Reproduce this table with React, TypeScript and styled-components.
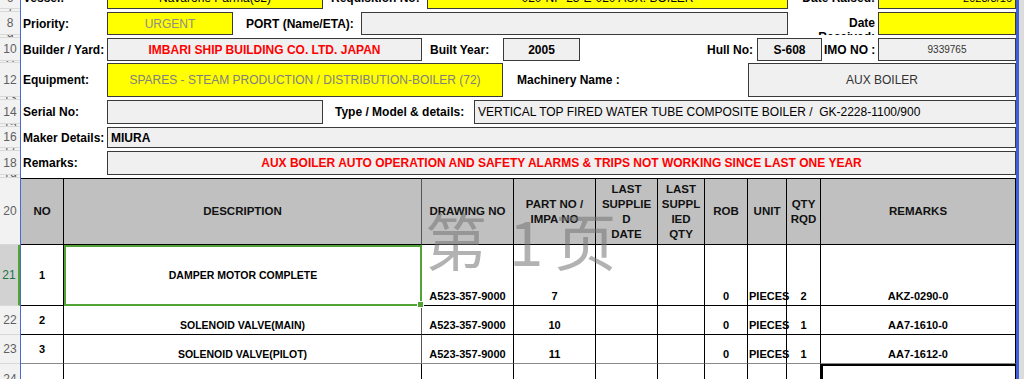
import React from 'react';
import styled, { createGlobalStyle } from 'styled-components';

const GlobalStyle = createGlobalStyle`
  html, body {
    margin: 0;
    padding: 0;
    background: #fff;
  }
  body {
    font-family: "Liberation Sans", Arial, sans-serif;
  }
`;

const Screen = styled.div`
  position: relative;
  width: 1024px;
  height: 379px;
  overflow: hidden;
  display: flex;
  background: #fff;
`;

const Sheet = styled.div`
  width: 1016px;
  flex-shrink: 0;
  display: flex;
  flex-direction: column;
  margin-top: -13px;
`;

const PageEdge = styled.div`
  width: 3px;
  flex-shrink: 0;
  background: #3f5fd6;
`;

const Outside = styled.div`
  flex: 1;
  background: #dcdcdc;
`;

const Row = styled.div<{ $h: number }>`
  display: flex;
  height: ${p => p.$h}px;
  flex-shrink: 0;
`;

const RowHead = styled.div<{ $active?: boolean }>`
  width: 20px;
  flex-shrink: 0;
  box-sizing: border-box;
  background: ${p => (p.$active ? '#d2d2d2' : '#f2f2f2')};
  border-bottom: 1px solid #d8d8d8;
  border-right: ${p => (p.$active ? '2px solid #4ea72e' : 'none')};
  color: ${p => (p.$active ? '#217346' : '#5f5f5f')};
  font-size: 12px;
  display: flex;
  align-items: center;
  justify-content: center;
  overflow: hidden;
`;

const Content = styled.div`
  flex: 1;
  display: flex;
  min-width: 0;
  border-left: 1px solid #4a66d9;
`;

const Label = styled.div<{ $w: number; $right?: boolean; $pad?: number }>`
  width: ${p => p.$w}px;
  flex-shrink: 0;
  box-sizing: border-box;
  display: flex;
  align-items: center;
  justify-content: ${p => (p.$right ? 'flex-end' : 'flex-start')};
  padding-left: ${p => (p.$right ? 0 : p.$pad ?? 2)}px;
  padding-right: ${p => (p.$right ? p.$pad ?? 3 : 0)}px;
  font-size: 12px;
  font-weight: bold;
  color: #000;
  white-space: nowrap;
  overflow: hidden;
`;

const StackLabel = styled.div<{ $w: number }>`
  width: ${p => p.$w}px;
  flex-shrink: 0;
  box-sizing: border-box;
  padding: 4px 3px 0 0;
  text-align: right;
  font-size: 12px;
  line-height: 14px;
  font-weight: bold;
  color: #000;
  overflow: hidden;
`;

const Field = styled.div<{
  $w?: number;
  $yellow?: boolean;
  $color?: string;
  $bold?: boolean;
  $align?: 'left' | 'center' | 'right';
  $size?: number;
}>`
  width: ${p => (p.$w ? `${p.$w}px` : 'auto')};
  flex: ${p => (p.$w ? 'none' : '1')};
  box-sizing: border-box;
  border: 1px solid #3a3a3a;
  background: ${p => (p.$yellow ? '#ffff00' : '#f0f0f0')};
  display: flex;
  align-items: center;
  justify-content: ${p =>
    p.$align === 'left' ? 'flex-start' : p.$align === 'right' ? 'flex-end' : 'center'};
  padding: 0 3px;
  font-size: ${p => p.$size ?? 12}px;
  font-weight: ${p => (p.$bold ? 'bold' : 'normal')};
  color: ${p => p.$color ?? '#000'};
  white-space: nowrap;
  overflow: hidden;
`;

const HeadCell = styled.div<{ $w: number; $dark?: boolean }>`
  width: ${p => p.$w}px;
  flex-shrink: 0;
  box-sizing: border-box;
  background: #c0c0c0;
  border-top: 1px solid #000;
  border-bottom: 1px solid #000;
  border-right: 1px solid ${p => (p.$dark ? '#555' : '#000')};
  display: flex;
  align-items: center;
  justify-content: center;
  text-align: center;
  font-size: 11.5px;
  line-height: 15px;
  font-weight: bold;
  color: #111;
`;

const DataCell = styled.div<{
  $w: number;
  $mid?: boolean;
  $left?: boolean;
  $size?: number;
  $lastRow?: boolean;
  $dark?: boolean;
}>`
  width: ${p => p.$w}px;
  flex-shrink: 0;
  box-sizing: border-box;
  border-right: 1px solid ${p => (p.$dark ? '#555' : '#000')};
  border-bottom: 1px solid ${p => (p.$lastRow ? '#8a8a8a' : '#000')};
  display: flex;
  align-items: ${p => (p.$mid ? 'center' : 'flex-end')};
  justify-content: ${p => (p.$left ? 'flex-start' : 'center')};
  padding: 0 0 ${p => (p.$mid ? 0 : 2)}px ${p => (p.$left ? 1 : 0)}px;
  font-size: ${p => p.$size ?? 11}px;
  line-height: 13px;
  font-weight: bold;
  color: #000;
  white-space: nowrap;
`;

const SelectedCell = styled(DataCell)`
  position: relative;
  border: 2px solid #52a336;

  &::after {
    content: '';
    position: absolute;
    right: -4px;
    bottom: -4px;
    width: 5px;
    height: 5px;
    background: #52a336;
    border: 1px solid #fff;
  }
`;

const EmptyCell = styled.div<{ $w: number; $boxed?: boolean }>`
  width: ${p => p.$w}px;
  flex-shrink: 0;
  box-sizing: border-box;
  border-right: 1px solid #000;
  border-top: ${p => (p.$boxed ? '2px solid #000' : 'none')};
  border-left: ${p => (p.$boxed ? '2px solid #000' : 'none')};
`;

// page-number watermark of the page break preview, lies over the table
const Watermark = styled.div`
  position: absolute;
  left: 425px;
  top: 208px;
  display: flex;
  align-items: center;
  font-family: "Noto Sans CJK SC", sans-serif;
  font-weight: 400;
  font-size: 62px;
  line-height: 1;
  color: rgba(115, 115, 115, 0.55);
  pointer-events: none;
`;

const Glyph = styled.span<{ $ml?: number }>`
  margin-left: ${p => p.$ml ?? 0}px;
`;

const cols = [43, 358, 92, 82, 62, 47, 43, 39, 34, 195];

const items = [
  { no: '1', desc: 'DAMPER MOTOR COMPLETE', dwg: 'A523-357-9000', part: '7', rem: 'AKZ-0290-0', qty: '2', h: 61 },
  { no: '2', desc: 'SOLENOID VALVE(MAIN)', dwg: 'A523-357-9000', part: '10', rem: 'AA7-1610-0', qty: '1', h: 29 },
  { no: '3', desc: 'SOLENOID VALVE(PILOT)', dwg: 'A523-357-9000', part: '11', rem: 'AA7-1612-0', qty: '1', h: 29 },
];

const Spacer: React.FC<{ n: string; h: number }> = ({ n, h }) => (
  <Row $h={h}>
    <RowHead>{n}</RowHead>
    <Content />
  </Row>
);

export default function App() {
  return (
    <Screen>
      <GlobalStyle />
      <Sheet>
        <Row $h={22}>
          <RowHead>6</RowHead>
          <Content>
            <Label $w={86}>Vessel:</Label>
            <Field $w={216} $yellow>Navarone Parma(32)</Field>
            <Label $w={104} $pad={8}>Requisition No:</Label>
            <Field $w={361} $yellow>020-NP-23-E-020 AUX. BOILER</Field>
            <Label $w={90} $right>Date Raised:</Label>
            <Field $yellow $align="right" $size={11}>2023/3/16</Field>
          </Content>
        </Row>
        <Spacer n="7" h={3} />
        <Row $h={23}>
          <RowHead>8</RowHead>
          <Content>
            <Label $w={86}>Priority:</Label>
            <Field $w={126} $yellow $color="#8c8c8c">URGENT</Field>
            <Label $w={128} $pad={13}>PORT (Name/ETA):</Label>
            <Field $w={427} />
            <StackLabel $w={90}>
              Date
              <br />
              Received:
            </StackLabel>
            <Field $yellow />
          </Content>
        </Row>
        <Spacer n="9" h={3} />
        <Row $h={23}>
          <RowHead>10</RowHead>
          <Content>
            <Label $w={86}>Builder / Yard:</Label>
            <Field $w={315} $bold $color="#ff0000">IMBARI SHIP BUILDING CO. LTD. JAPAN</Field>
            <Label $w={81} $pad={8}>Built Year:</Label>
            <Field $w={77} $bold>2005</Field>
            <Label $w={177} $right $pad={4}>Hull No:</Label>
            <Field $w={65} $bold>S-608</Field>
            <Label $w={56} $pad={2}>IMO NO :</Label>
            <Field $size={10} $color="#333">9339765</Field>
          </Content>
        </Row>
        <Spacer n="11" h={2} />
        <Row $h={34}>
          <RowHead>12</RowHead>
          <Content>
            <Label $w={86}>Equipment:</Label>
            <Field $w={396} $yellow $color="#808080">
              SPARES - STEAM PRODUCTION / DISTRIBUTION-BOILER (72)
            </Field>
            <Label $w={245} $pad={14}>Machinery Name :</Label>
            <Field $color="#333">AUX BOILER</Field>
          </Content>
        </Row>
        <Spacer n="13" h={3} />
        <Row $h={24}>
          <RowHead>14</RowHead>
          <Content>
            <Label $w={86}>Serial No:</Label>
            <Field $w={216} />
            <Label $w={151} $pad={12}>Type / Model &amp; details:</Label>
            <Field $align="left">VERTICAL TOP FIRED WATER TUBE COMPOSITE BOILER /&nbsp; GK-2228-1100/900</Field>
          </Content>
        </Row>
        <Spacer n="15" h={3} />
        <Row $h={21}>
          <RowHead>16</RowHead>
          <Content>
            <Label $w={86}>Maker Details:</Label>
            <Field $align="left" $bold>MIURA</Field>
          </Content>
        </Row>
        <Spacer n="17" h={3} />
        <Row $h={24}>
          <RowHead>18</RowHead>
          <Content>
            <Label $w={86}>Remarks:</Label>
            <Field $bold $color="#ff0000">
              AUX BOILER AUTO OPERATION AND SAFETY ALARMS &amp; TRIPS NOT WORKING SINCE LAST ONE YEAR
            </Field>
          </Content>
        </Row>
        <Spacer n="19" h={3} />
        <Row $h={67}>
          <RowHead>20</RowHead>
          <Content>
            <HeadCell $w={cols[0]}>NO</HeadCell>
            <HeadCell $w={cols[1]} $dark>DESCRIPTION</HeadCell>
            <HeadCell $w={cols[2]}>DRAWING NO</HeadCell>
            <HeadCell $w={cols[3]}>PART NO /<br />IMPA NO</HeadCell>
            <HeadCell $w={cols[4]}>LAST<br />SUPPLIE<br />D<br />DATE</HeadCell>
            <HeadCell $w={cols[5]}>LAST<br />SUPPL<br />IED<br />QTY</HeadCell>
            <HeadCell $w={cols[6]}>ROB</HeadCell>
            <HeadCell $w={cols[7]}>UNIT</HeadCell>
            <HeadCell $w={cols[8]}>QTY<br />RQD</HeadCell>
            <HeadCell $w={cols[9]}>REMARKS</HeadCell>
          </Content>
        </Row>
        {items.map((it, i) => {
          const last = i === items.length - 1;
          const Desc = i === 0 ? SelectedCell : DataCell;
          return (
            <Row $h={it.h} key={it.no}>
              <RowHead $active={i === 0}>{21 + i}</RowHead>
              <Content>
                <DataCell $w={cols[0]} $mid $lastRow={last}>{it.no}</DataCell>
                <Desc $w={cols[1]} $mid={i === 0} $size={10.5} $lastRow={last} $dark>
                  {it.desc}
                </Desc>
                <DataCell $w={cols[2]} $lastRow={last}>{it.dwg}</DataCell>
                <DataCell $w={cols[3]} $lastRow={last}>{it.part}</DataCell>
                <DataCell $w={cols[4]} $lastRow={last} />
                <DataCell $w={cols[5]} $lastRow={last} />
                <DataCell $w={cols[6]} $lastRow={last}>0</DataCell>
                <DataCell $w={cols[7]} $left $lastRow={last}>PIECES</DataCell>
                <DataCell $w={cols[8]} $lastRow={last}>{it.qty}</DataCell>
                <DataCell $w={cols[9]} $lastRow={last}>{it.rem}</DataCell>
              </Content>
            </Row>
          );
        })}
        <Row $h={30}>
          <RowHead>24</RowHead>
          <Content>
            {cols.map((w, i) => (
              <EmptyCell key={i} $w={w} $boxed={i === cols.length - 1} />
            ))}
          </Content>
        </Row>
      </Sheet>
      <PageEdge />
      <Outside />
      <Watermark>
        <Glyph>第</Glyph>
        <Glyph $ml={22}>1</Glyph>
        <Glyph $ml={11}>页</Glyph>
      </Watermark>
    </Screen>
  );
}
